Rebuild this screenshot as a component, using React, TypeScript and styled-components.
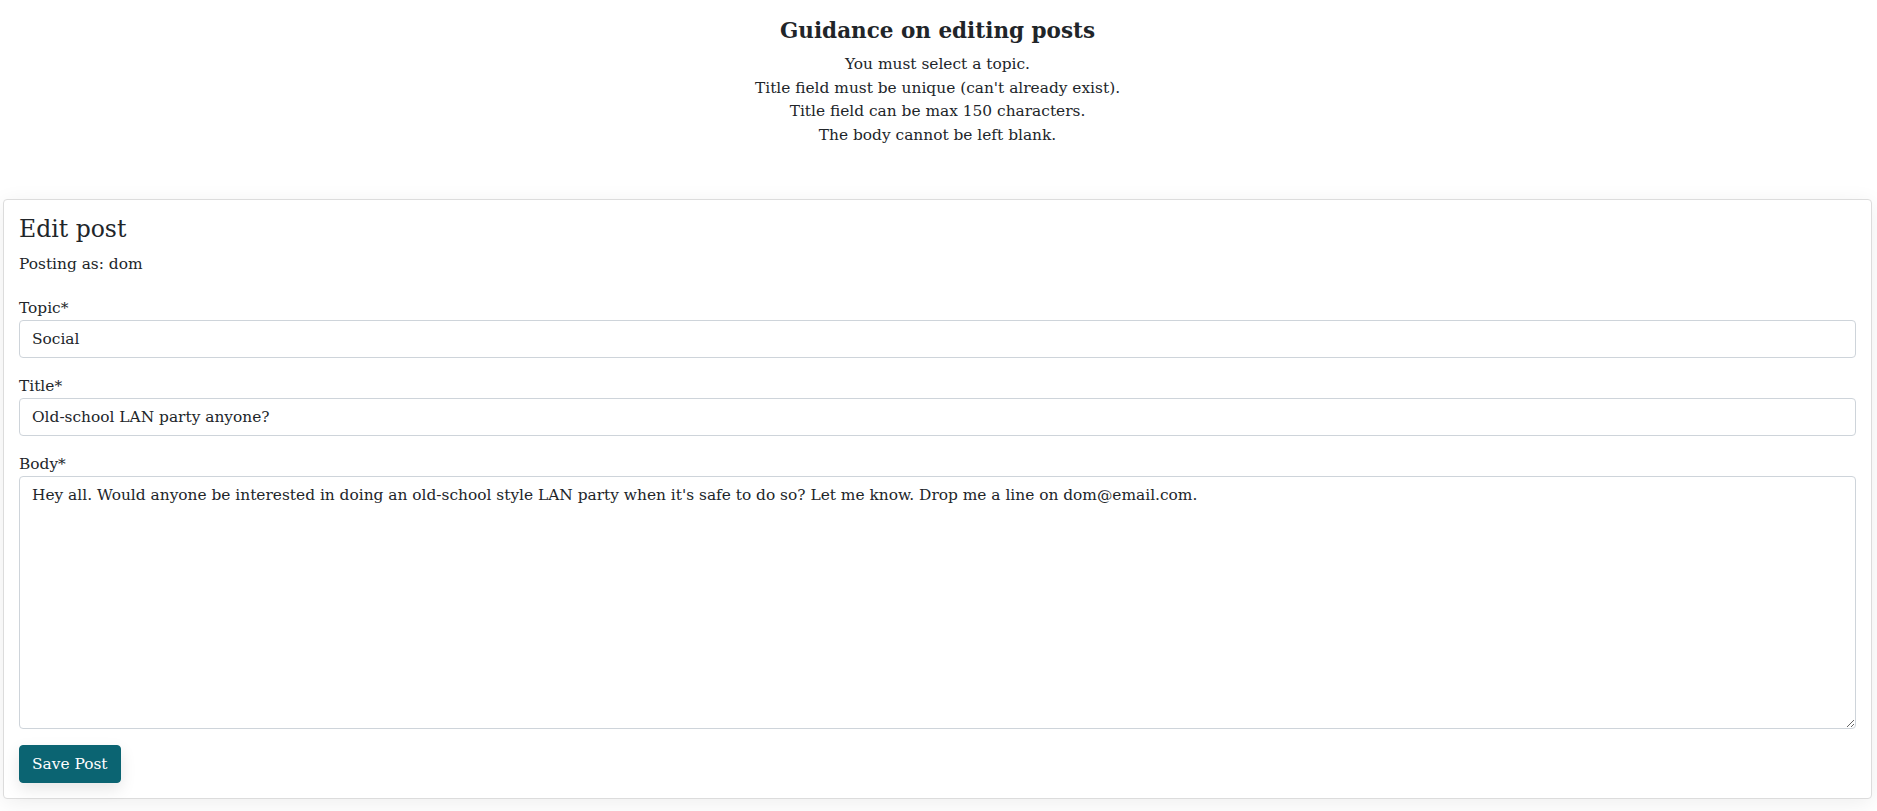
import React from "react";
import styled, { createGlobalStyle } from "styled-components";

const Global = createGlobalStyle`
  html, body { margin: 0; padding: 0; background: #ffffff; }
  body {
    font-family: "DejaVu Serif", "Liberation Serif", serif;
    font-size: 15.4px;
    line-height: 24px;
    color: #212529;
  }
  * { box-sizing: border-box; }
`;

const Page = styled.div`
  display: flex;
  flex-direction: column;
  padding: 0 5px 12px 3px;
`;

const Guidance = styled.section`
  display: flex;
  flex-direction: column;
  align-items: center;
  text-align: center;
  padding-top: 18px;
  margin-bottom: 51px;
`;

const GuidanceTitle = styled.h3`
  margin: 0 0 9px;
  font-size: 21.5px;
  font-weight: 700;
  line-height: 26px;
  color: #212529;
`;

const GuidanceLine = styled.p`
  margin: 0;
  line-height: 23.7px;
`;

const Card = styled.form`
  display: flex;
  flex-direction: column;
  border: 1px solid #dcdcdc;
  border-radius: 4px;
  background: #fff;
  padding: 15px 15px 15px;
  box-shadow: 0 4px 22px rgba(0, 0, 0, 0.07);
`;

const CardTitle = styled.h2`
  margin: 0 0 8px;
  font-size: 23.5px;
  font-weight: 400;
  line-height: 29px;
`;

const Meta = styled.p`
  margin: 0 0 20px;
`;

const Field = styled.div`
  display: flex;
  flex-direction: column;
  margin-bottom: 16px;
`;

const Label = styled.label`
  line-height: 24px;
`;

const Input = styled.input`
  height: 38px;
  padding: 6px 12px;
  font: inherit;
  color: #212529;
  border: 1px solid #ced4da;
  border-radius: 4px;
  background: #fff;
  outline: none;
`;

const TextArea = styled.textarea`
  height: 253px;
  padding: 6px 12px;
  font: inherit;
  line-height: 24px;
  color: #212529;
  border: 1px solid #ced4da;
  border-radius: 4px;
  background: #fff;
  outline: none;
  resize: vertical;
`;

const Actions = styled.div`
  display: flex;
`;

const Button = styled.button`
  height: 38px;
  padding: 6px 12px;
  font: inherit;
  color: #fff;
  background: #0b6472;
  border: 1px solid #0b6472;
  border-radius: 4px;
  box-shadow: 0 6px 16px rgba(0, 0, 0, 0.1);
  cursor: pointer;
`;

export default function App() {
  return (
    <>
      <Global />
      <Page>
        <Guidance>
          <GuidanceTitle>Guidance on editing posts</GuidanceTitle>
          <GuidanceLine>You must select a topic.</GuidanceLine>
          <GuidanceLine>Title field must be unique (can't already exist).</GuidanceLine>
          <GuidanceLine>Title field can be max 150 characters.</GuidanceLine>
          <GuidanceLine>The body cannot be left blank.</GuidanceLine>
        </Guidance>
        <Card onSubmit={(e) => e.preventDefault()}>
          <CardTitle>Edit post</CardTitle>
          <Meta>Posting as: dom</Meta>
          <Field>
            <Label htmlFor="topic">Topic*</Label>
            <Input id="topic" defaultValue="Social" readOnly />
          </Field>
          <Field>
            <Label htmlFor="title">Title*</Label>
            <Input id="title" defaultValue="Old-school LAN party anyone?" />
          </Field>
          <Field>
            <Label htmlFor="body">Body*</Label>
            <TextArea
              id="body"
              defaultValue="Hey all. Would anyone be interested in doing an old-school style LAN party when it's safe to do so? Let me know. Drop me a line on dom@email.com."
            />
          </Field>
          <Actions>
            <Button type="submit">Save Post</Button>
          </Actions>
        </Card>
      </Page>
    </>
  );
}
